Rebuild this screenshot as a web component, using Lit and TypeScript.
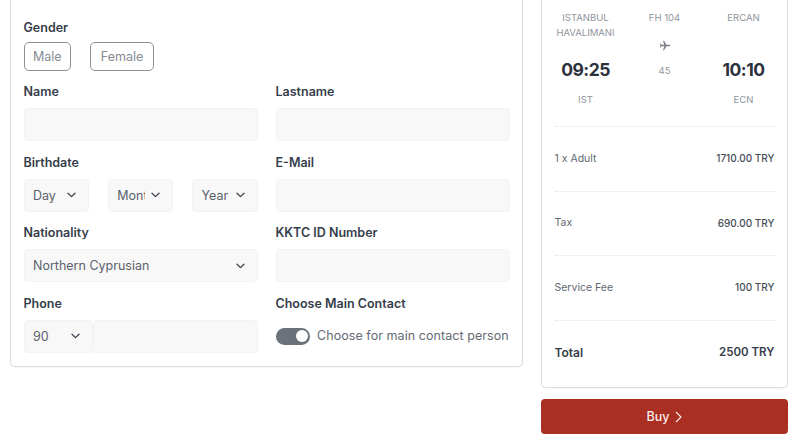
import { LitElement, html, css } from "lit";
import { customElement } from "lit/decorators.js";

const chevron = html`<svg class="chev" width="9" height="6" viewBox="0 0 9 6" fill="none"><path d="M1 1.2 L4.5 4.6 L8 1.2" stroke="#3d4450" stroke-width="1.3" stroke-linecap="round" stroke-linejoin="round"/></svg>`;

@customElement("app-root")
export class AppRoot extends LitElement {
  static styles = css`
    :host {
      display: block;
      width: 800px;
      height: 439px;
      overflow: hidden;
      background: #fff;
      font-family: Inter, "Open Sans", "Liberation Sans", sans-serif;
      color: #2f3642;
      box-sizing: border-box;
    }
    * { box-sizing: border-box; }
    .page { display: flex; align-items: flex-start; padding-left: 10px; gap: 18px; }
    .form {
      width: 513px;
      height: 366.5px;
      border: 1px solid #dcdcdc;
      border-top: 0;
      border-radius: 0 0 5px 5px;
      padding: 18.5px 12.5px 0 12.5px;
      display: grid;
      grid-template-columns: 234px 234px;
      column-gap: 18px;
      grid-auto-rows: min-content;
      box-shadow: 0 1px 1px rgba(0,0,0,.04);
    }
    .field { margin-bottom: 12.4px; }
    .full { grid-column: 1 / -1; }
    .label { display: block; height: 17px; line-height: 17px; font-size: 12.5px; font-weight: 600; color: #363d4a; margin-bottom: 8px; white-space: nowrap; }
    .gender-label { margin-bottom: 6.5px; }
    .genders { display: flex; gap: 19px; }
    .radio { height: 29px; border: 1px solid #8b8f94; border-radius: 5px; display: flex; align-items: center; justify-content: center; font-size: 12.5px; color: #858b93; }
    .male { width: 47.5px; }
    .female { width: 64px; }
    .input { height: 33px; background: #f8f8f8; border: 1px solid #f3f3f3; border-radius: 4px; }
    .select { display: flex; align-items: center; justify-content: space-between; padding: 0 12px 0 8.5px; font-size: 12.5px; color: #5b616b; overflow: hidden; white-space: nowrap; }
    .chev { flex: none; }
    .dates { display: flex; justify-content: space-between; }
    .dates .select { width: 65.5px; }
    .clip { display: block; width: 28px; overflow: hidden; }
    .phone { display: flex; }
    .code { width: 69.5px; flex: none; }
    .num { flex: 1; }
    .toggle-row { display: flex; align-items: center; height: 33px; gap: 7.5px; font-size: 12.5px; color: #646a73; white-space: nowrap; letter-spacing: .06px; }
    .toggle-text { padding-bottom: 1px; }
    .toggle { width: 34px; height: 17px; border-radius: 9px; background: #6c727a; position: relative; flex: none; }
    .toggle::after { content: ""; position: absolute; right: 2px; top: 2.5px; width: 12px; height: 12px; border-radius: 50%; background: #fff; }
    .side { width: 247px; }
    .summary {
      height: 387.5px;
      border: 1px solid #dedede;
      border-top: 0;
      border-radius: 0 0 5px 5px;
      padding: 9.5px 12.5px 0 12.5px;
      box-shadow: 0 1px 1px rgba(0,0,0,.04);
    }
    .flight { display: flex; justify-content: space-between; height: 116.5px; }
    .col { width: 62px; text-align: center; display: flex; flex-direction: column; align-items: center; }
    .city { height: 30px; font-size: 9.5px; line-height: 15px; color: #8f949b; white-space: nowrap; }
    .flight-no { height: 15px; }
    .time { height: 30px; margin-top: 15px; line-height: 30px; font-size: 17.5px; font-weight: 700; letter-spacing: -.5px; color: #2c323d; white-space: nowrap; }
    .iata { margin-top: 7.5px; line-height: 15px; font-size: 9.5px; color: #8f949b; }
    .plane { margin-top: 15.5px; display: block; }
    .dur { margin-top: 12px; line-height: 15px; font-size: 9.5px; color: #8f949b; }
    .row { height: 64.5px; padding-bottom: 1px; border-top: 1px dotted #e2e2e2; display: flex; justify-content: space-between; align-items: center; font-size: 10.5px; color: #62686f; }
    .val { font-size: 10px; font-weight: 500; color: #474d58; }
    .total { font-size: 12px; font-weight: 600; color: #363d4a; padding-bottom: 0; }
    .total .val { font-size: 11.5px; font-weight: 600; color: #363d4a; }
    .buy {
      margin-top: 11.5px;
      height: 35px;
      background: #a92f22;
      border-radius: 4px;
      color: #fbeeee;
      font-size: 12.5px;
      font-weight: 500;
      display: flex;
      align-items: center;
      justify-content: center;
      gap: 6px;
    }
  `;

  private field(label: string) {
    return html`<div class="field"><span class="label">${label}</span><div class="input"></div></div>`;
  }

  render() {
    return html`<div class="page">
      <section class="form">
        <div class="field full">
          <span class="label gender-label">Gender</span>
          <div class="genders"><div class="radio male">Male</div><div class="radio female">Female</div></div>
        </div>
        ${this.field("Name")}
        ${this.field("Lastname")}
        <div class="field">
          <span class="label">Birthdate</span>
          <div class="dates">
            <div class="input select"><span>Day</span>${chevron}</div>
            <div class="input select"><span class="clip">Month</span>${chevron}</div>
            <div class="input select"><span>Year</span>${chevron}</div>
          </div>
        </div>
        ${this.field("E-Mail")}
        <div class="field">
          <span class="label">Nationality</span>
          <div class="input select"><span>Northern Cyprusian</span>${chevron}</div>
        </div>
        ${this.field("KKTC ID Number")}
        <div class="field">
          <span class="label">Phone</span>
          <div class="phone"><div class="input select code"><span>90</span>${chevron}</div><div class="input num"></div></div>
        </div>
        <div class="field">
          <span class="label">Choose Main Contact</span>
          <div class="toggle-row"><span class="toggle"></span><span class="toggle-text">Choose for main contact person</span></div>
        </div>
      </section>
      <aside class="side">
        <section class="summary">
          <div class="flight">
            <div class="col">
              <div class="city">ISTANBUL<br />HAVALIMANI</div>
              <div class="time">09:25</div>
              <div class="iata">IST</div>
            </div>
            <div class="col">
              <div class="city flight-no">FH 104</div>
              <svg class="plane" width="12" height="11" viewBox="0 0 14 12"><path fill="#7d8289" d="M13.4 6c0-.5-.8-.9-1.6-.9H8.7L5.9.4H4.7l1.4 4.7H3L2 3.7H1l.6 2.3L1 8.3h1L3 6.9h3.1L4.7 11.6h1.2l2.8-4.7h3.1c.8 0 1.6-.4 1.6-.9z"/></svg>
              <div class="dur">45</div>
            </div>
            <div class="col">
              <div class="city">ERCAN</div>
              <div class="time">10:10</div>
              <div class="iata">ECN</div>
            </div>
          </div>
          <div class="row"><span>1 x Adult</span><span class="val">1710.00 TRY</span></div>
          <div class="row"><span>Tax</span><span class="val">690.00 TRY</span></div>
          <div class="row"><span>Service Fee</span><span class="val">100 TRY</span></div>
          <div class="row total"><span>Total</span><span class="val">2500 TRY</span></div>
        </section>
        <div class="buy"><span>Buy</span><svg width="7" height="12" viewBox="0 0 7 12" fill="none"><path d="M1 1 L6 6 L1 11" stroke="#fbeeee" stroke-width="1.1"/></svg></div>
      </aside>
    </div>`;
  }
}
